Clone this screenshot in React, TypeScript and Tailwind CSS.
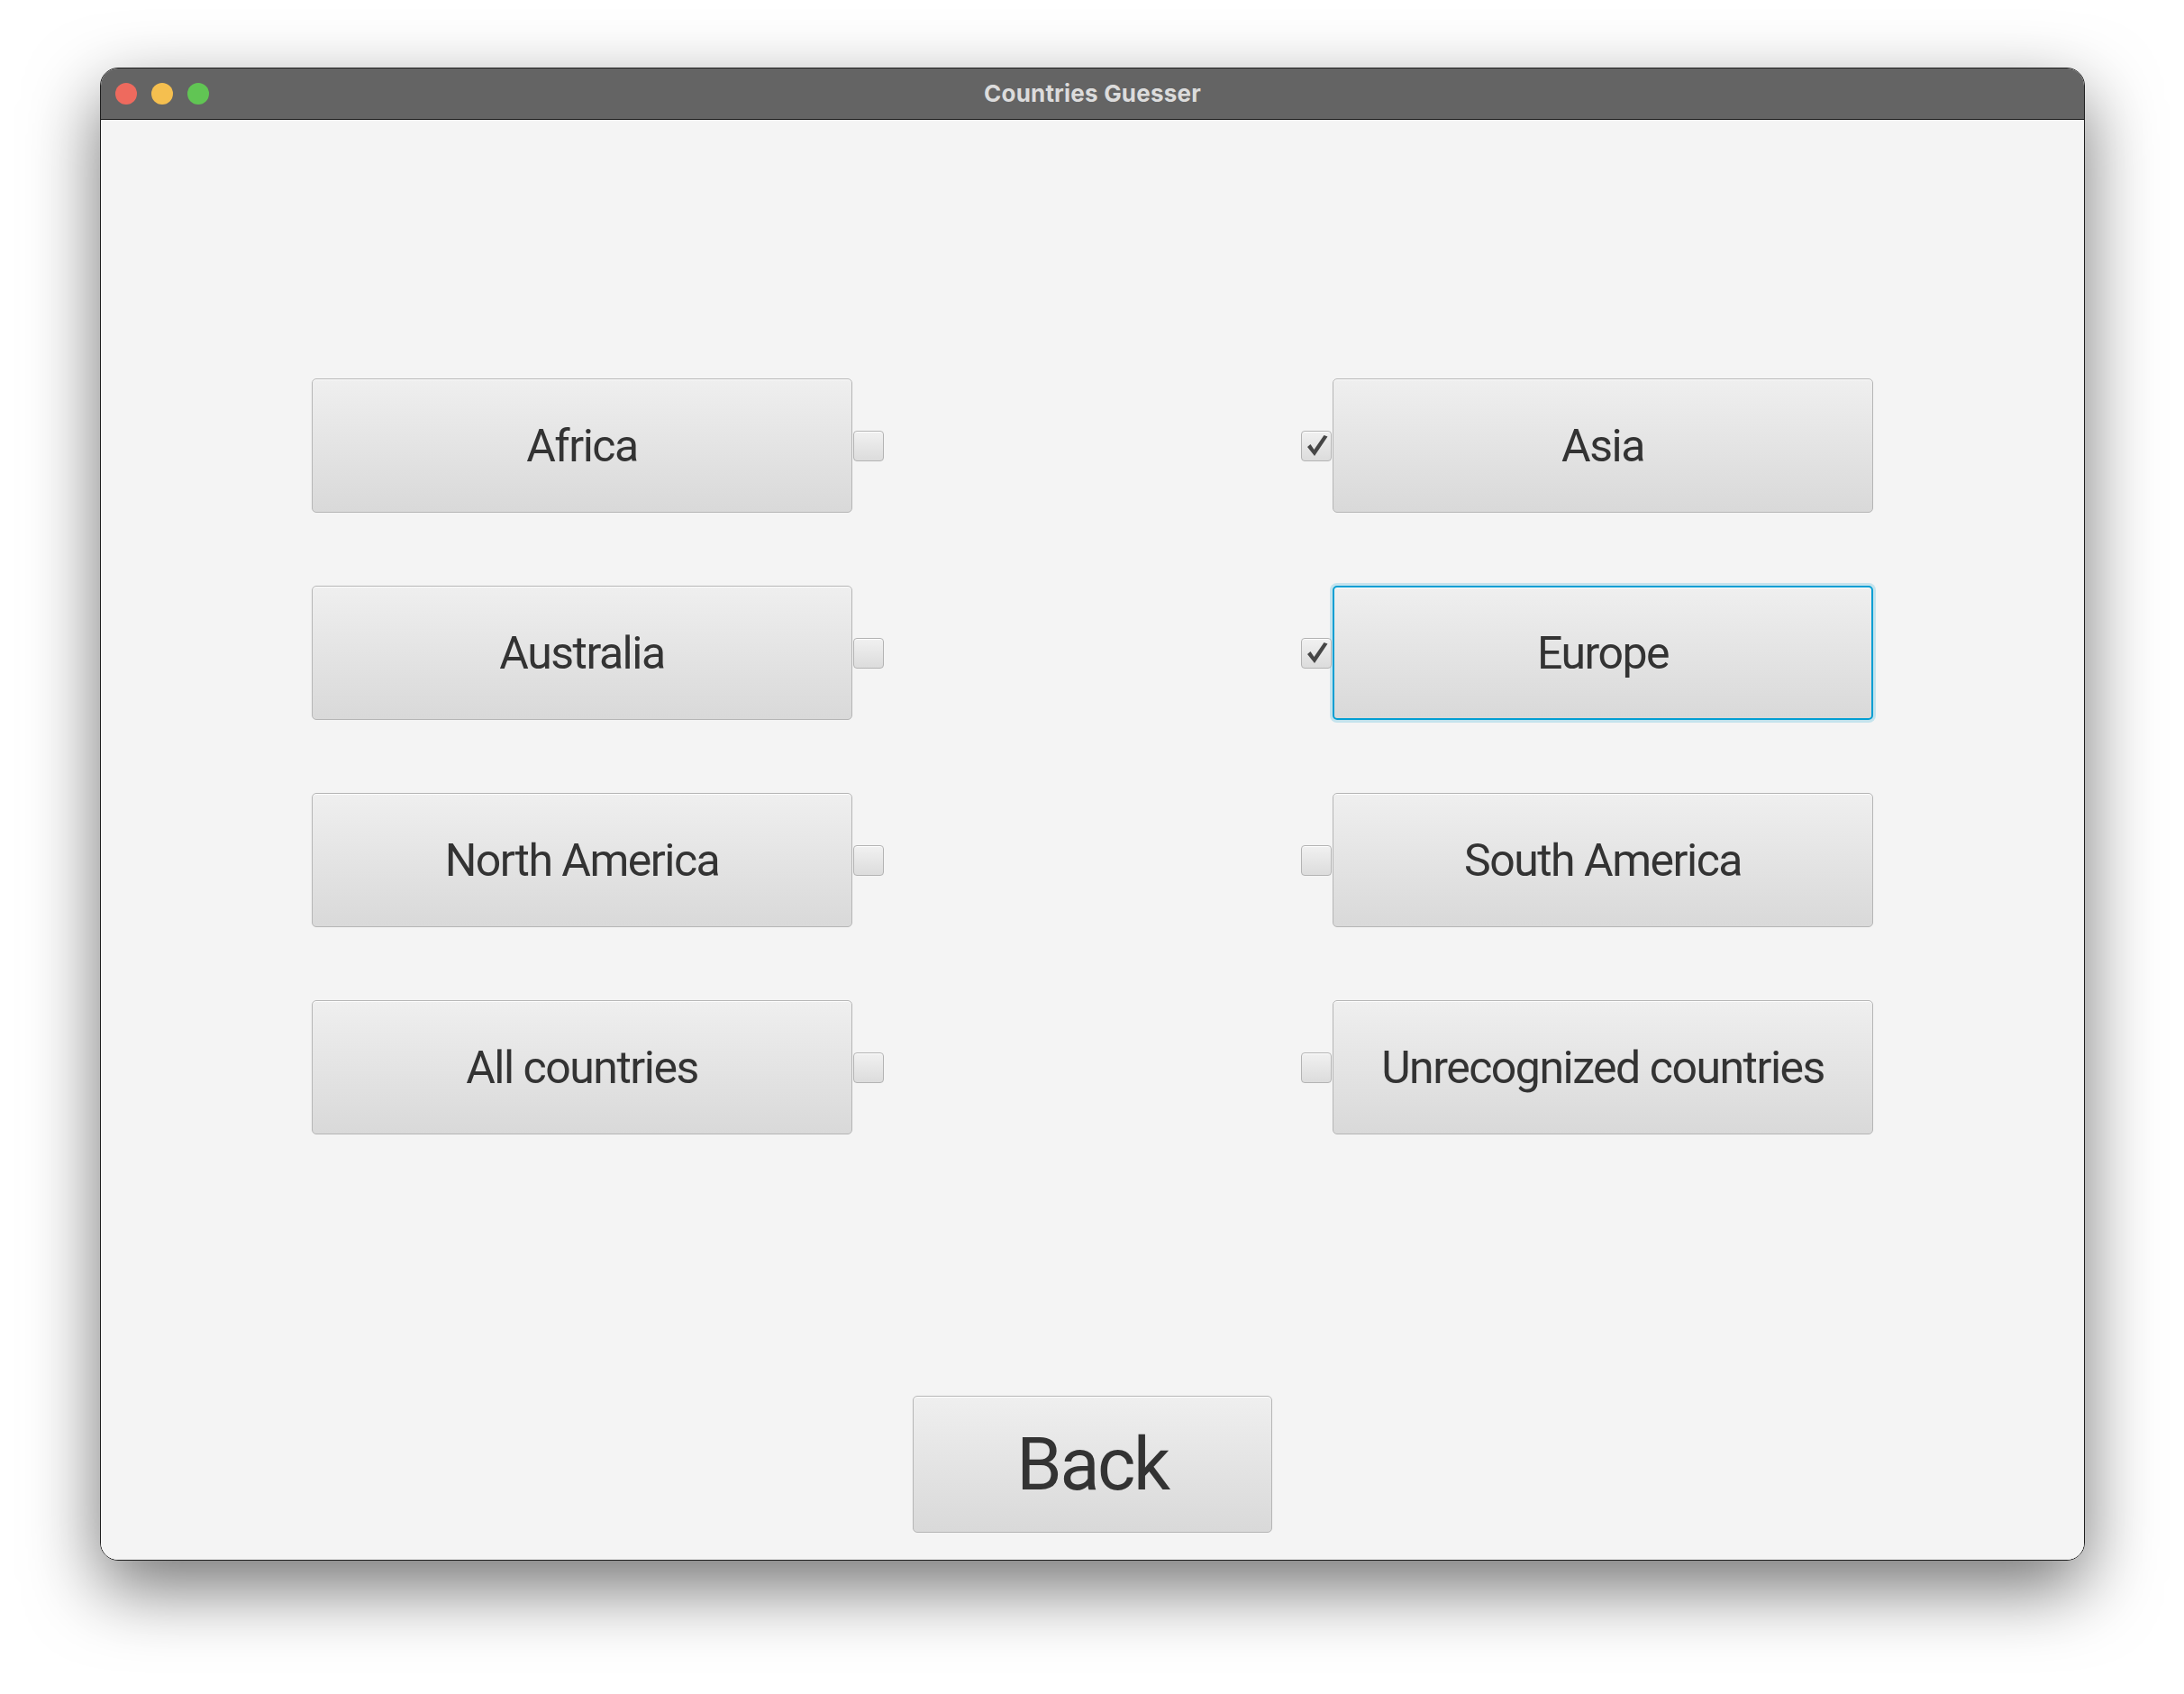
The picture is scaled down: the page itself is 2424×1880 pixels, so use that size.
const regions = [
  { left: 'Africa', right: 'Asia', leftChecked: false, rightChecked: true },
  { left: 'Australia', right: 'Europe', leftChecked: false, rightChecked: true, rightFocused: true },
  { left: 'North America', right: 'South America', leftChecked: false, rightChecked: false },
  { left: 'All countries', right: 'Unrecognized countries', leftChecked: false, rightChecked: false },
];

function CheckBox({ checked }: { checked: boolean }) {
  return (
    <div className="relative w-[34px] h-[34px] shrink-0 rounded-[4px] border border-[#b3b3b3] bg-gradient-to-b from-[#f1f1f1] to-[#dcdcdc] shadow-[inset_0_1px_0_rgba(255,255,255,0.9)]">
      {checked && (
        <svg className="absolute -left-px -top-px" width="34" height="34" viewBox="0 0 34 34">
          <path d="M7 18 L10.5 15 L14.5 21 L25.5 5 L29.5 6.5 L15 28 Z" fill="#464646" />
        </svg>
      )}
    </div>
  );
}

function FxButton({ label, focused, big }: { label: string; focused?: boolean; big?: boolean }) {
  return (
    <button
      className={
        'shrink-0 flex items-center justify-center pt-[2px] rounded-[5px] bg-gradient-to-b from-[#efefef] to-[#d9d9d9] text-[#333333] tracking-[-0.03em] shadow-[inset_0_1px_0_rgba(255,255,255,0.9)] ' +
        (big ? 'w-[399px] h-[152px] text-[81px] ' : 'w-[600px] h-[149px] text-[50px] ') +
        (focused
          ? 'border-2 border-[#039ed3] ring-[3px] ring-[#039ed3]/20'
          : 'border border-[#b5b5b5]')
      }
      style={{ fontFamily: 'Roboto, "Noto Sans", sans-serif' }}
    >
      {label}
    </button>
  );
}

export default function App() {
  return (
    <div className="w-[2424px] h-[1880px] bg-white pl-[111px] pt-[75px]" style={{ fontFamily: 'Inter, "Noto Sans", sans-serif' }}>
      <div className="w-[2203px] h-[1657px] flex flex-col rounded-[20px] overflow-hidden border border-[#1e1e1e] shadow-[0_30px_80px_rgba(0,0,0,0.55)]">
        {/* Title bar */}
        <div className="h-[57px] shrink-0 bg-[#646464] border-b border-[#1a1a1a] grid grid-cols-[1fr_auto_1fr] items-center">
          <div className="flex items-center gap-4 pl-[16px]">
            <span className="w-6 h-6 rounded-full bg-[#ee6a5e]" />
            <span className="w-6 h-6 rounded-full bg-[#f5bf4f]" />
            <span className="w-6 h-6 rounded-full bg-[#61c554]" />
          </div>
          <div className="text-[26px] font-bold text-[#dcdcdc] tracking-[0.2px] -mt-[2px]">Countries Guesser</div>
          <div />
        </div>

        {/* Content */}
        <div className="flex-1 bg-[#f4f4f4] flex flex-col items-center pt-[287px] pb-[30px]">
          <div className="w-full px-[234px] flex flex-col gap-[81px]">
            {regions.map((r) => (
              <div key={r.left} className="flex justify-between items-center">
                <div className="flex items-center gap-[1px]">
                  <FxButton label={r.left} />
                  <CheckBox checked={r.leftChecked} />
                </div>
                <div className="flex items-center gap-[1px]">
                  <CheckBox checked={r.rightChecked} />
                  <FxButton label={r.right} focused={r.rightFocused} />
                </div>
              </div>
            ))}
          </div>
          <div className="mt-auto">
            <FxButton label="Back" big />
          </div>
        </div>
      </div>
    </div>
  );
}
